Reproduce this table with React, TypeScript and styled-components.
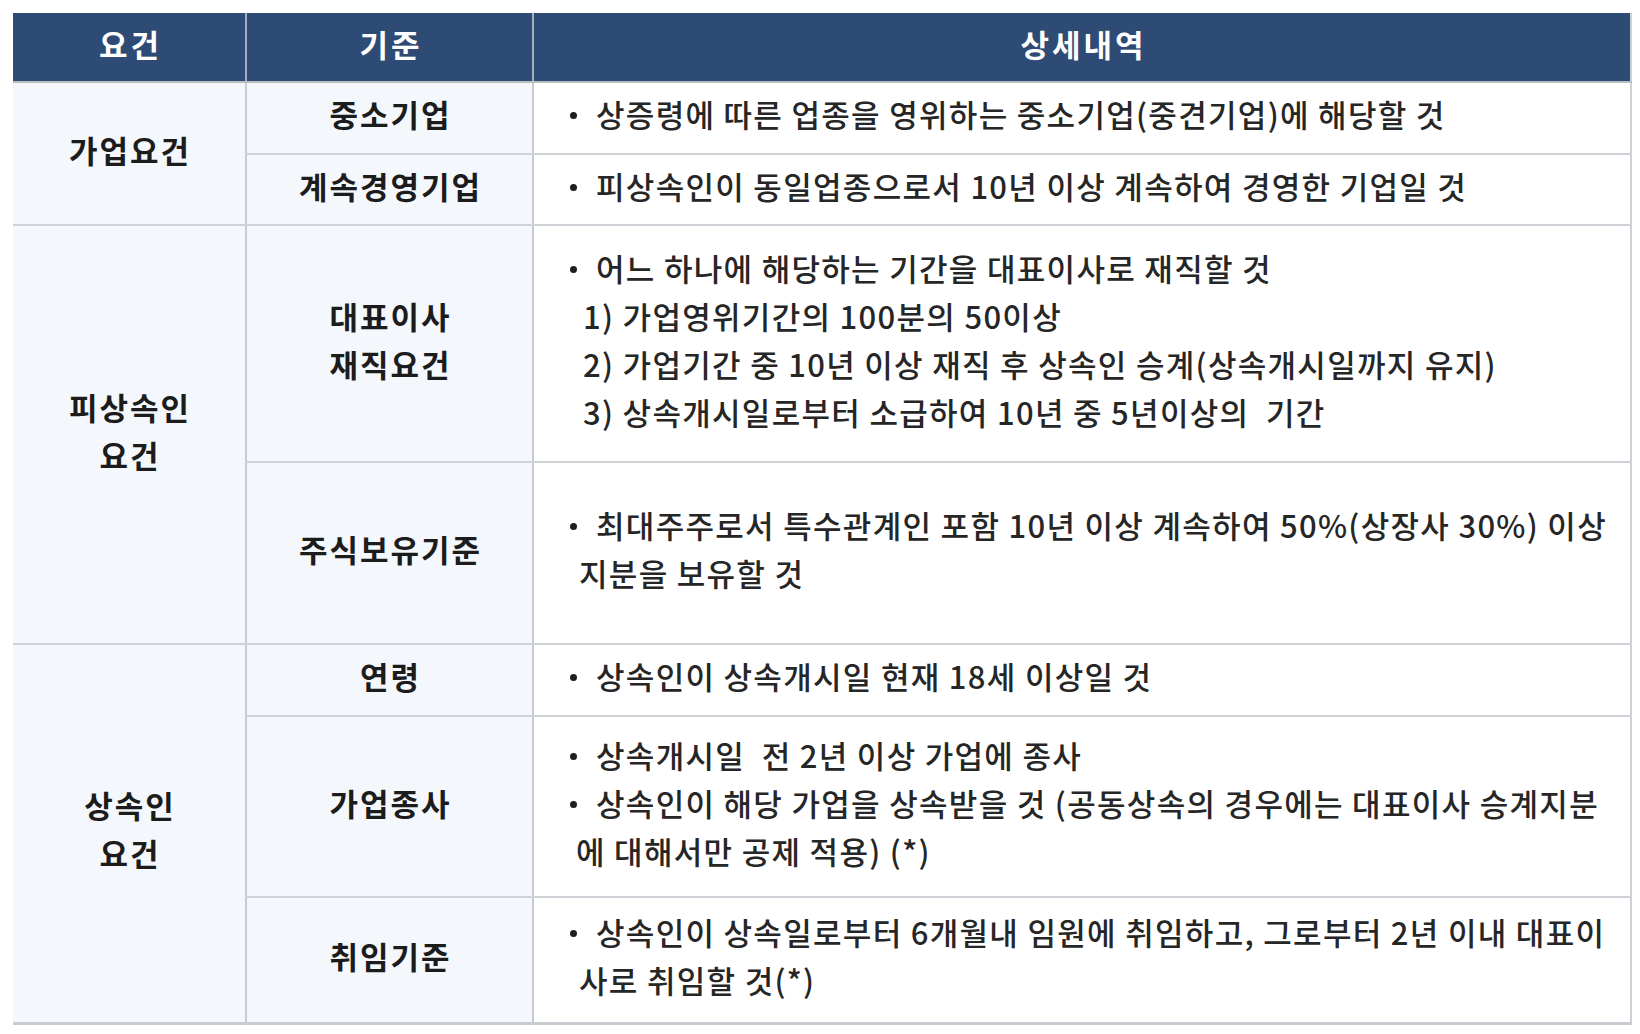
import React from "react";
import styled, { createGlobalStyle } from "styled-components";

const GlobalStyle = createGlobalStyle`
  html, body {
    margin: 0;
    padding: 0;
    background: #ffffff;
    overflow: hidden;
  }
  body {
    font-family: "Noto Sans CJK KR", "Noto Sans", sans-serif;
    color: #2a2a2a;
  }
`;

const Page = styled.div`
  padding: 13px 0 0 13px;
  width: 1640px;
  height: 1034px;
  box-sizing: border-box;
`;

const Table = styled.table`
  border-collapse: collapse;
  table-layout: fixed;
  width: 1618px;
  font-size: 31px;
  border-right: 2px solid #cdd0d4;
  border-bottom: 3px solid #c9ccd0;
`;

const Col = styled.col<{ $w: number }>`
  width: ${(p) => p.$w}px;
`;

const HeadRow = styled.tr`
  height: 69px;
`;

const HeadCell = styled.th`
  box-sizing: border-box;
  background: #2d4b74;
  color: #ffffff;
  font-weight: 700;
  text-align: center;
  vertical-align: middle;
  padding: 0 0 8px 3px;
  border-left: 2px solid #a7adb6;
  border-bottom: 2px solid #b9bec5;
  letter-spacing: 3px;
  &:first-child {
    border-left: none;
  }
`;

const Row = styled.tr<{ $h: number }>`
  height: ${(p) => p.$h}px;
`;

const LabelCell = styled.td<{ $first?: boolean }>`
  box-sizing: border-box;
  background: #f4f8fc;
  color: #1c1c1c;
  font-weight: 700;
  text-align: center;
  vertical-align: middle;
  line-height: 48px;
  padding: 0 0 8px 2px;
  border-left: ${(p) => (p.$first ? "none" : "2px solid #c8cbd0")};
  border-bottom: 2px solid #cfd2d6;
  letter-spacing: 2px;
`;

const DetailCell = styled.td`
  box-sizing: border-box;
  background: #ffffff;
  vertical-align: middle;
  padding: 0 0 8px 36px;
  border-left: 2px solid #c8cbd0;
  border-bottom: 2px solid #cfd2d6;
  overflow: hidden;
`;

const Line = styled.div<{ $indent?: number }>`
  height: 48px;
  line-height: 48px;
  white-space: pre;
  padding-left: ${(p) => p.$indent ?? 0}px;
  color: #262626;
  font-weight: 500;
  letter-spacing: 1.3px;
`;

const Bullet = styled.span`
  display: inline-block;
  width: 26px;
  vertical-align: middle;
  position: relative;
  top: -3px;
  &::before {
    content: "";
    display: block;
    width: 7px;
    height: 7px;
    border-radius: 50%;
    background: #1e1e1e;
  }
`;

type L = { text: string; bullet?: boolean; indent?: number };

const Detail: React.FC<{ lines: L[] }> = ({ lines }) => (
  <DetailCell>
    {lines.map((l, i) => (
      <Line key={i} $indent={l.bullet ? 0 : l.indent ?? 8}>
        {l.bullet && <Bullet />}
        {l.text}
      </Line>
    ))}
  </DetailCell>
);

export default function App() {
  return (
    <>
      <GlobalStyle />
      <Page>
        <Table>
          <colgroup>
            <Col $w={233} />
            <Col $w={287} />
            <Col $w={1098} />
          </colgroup>
          <thead>
            <HeadRow>
              <HeadCell>요건</HeadCell>
              <HeadCell>기준</HeadCell>
              <HeadCell>상세내역</HeadCell>
            </HeadRow>
          </thead>
          <tbody>
            <Row $h={72}>
              <LabelCell $first rowSpan={2}>
                가업요건
              </LabelCell>
              <LabelCell>중소기업</LabelCell>
              <Detail
                lines={[
                  {
                    bullet: true,
                    text: "상증령에 따른 업종을 영위하는 중소기업(중견기업)에 해당할 것",
                  },
                ]}
              />
            </Row>
            <Row $h={71}>
              <LabelCell>계속경영기업</LabelCell>
              <Detail
                lines={[
                  {
                    bullet: true,
                    text: "피상속인이 동일업종으로서 10년 이상 계속하여 경영한 기업일 것",
                  },
                ]}
              />
            </Row>
            <Row $h={237}>
              <LabelCell $first rowSpan={2}>
                피상속인
                <br />
                요건
              </LabelCell>
              <LabelCell>
                대표이사
                <br />
                재직요건
              </LabelCell>
              <Detail
                lines={[
                  { bullet: true, text: "어느 하나에 해당하는 기간을 대표이사로 재직할 것" },
                  { indent: 13, text: "1) 가업영위기간의 100분의 50이상" },
                  {
                    indent: 13,
                    text: "2) 가업기간 중 10년 이상 재직 후 상속인 승계(상속개시일까지 유지)",
                  },
                  {
                    indent: 13,
                    text: "3) 상속개시일로부터 소급하여 10년 중 5년이상의  기간",
                  },
                ]}
              />
            </Row>
            <Row $h={182}>
              <LabelCell>주식보유기준</LabelCell>
              <Detail
                lines={[
                  {
                    bullet: true,
                    text: "최대주주로서 특수관계인 포함 10년 이상 계속하여 50%(상장사 30%) 이상",
                  },
                  { indent: 9, text: "지분을 보유할 것" },
                ]}
              />
            </Row>
            <Row $h={72}>
              <LabelCell $first rowSpan={3}>
                상속인
                <br />
                요건
              </LabelCell>
              <LabelCell>연령</LabelCell>
              <Detail
                lines={[{ bullet: true, text: "상속인이 상속개시일 현재 18세 이상일 것" }]}
              />
            </Row>
            <Row $h={181}>
              <LabelCell>가업종사</LabelCell>
              <Detail
                lines={[
                  { bullet: true, text: "상속개시일  전 2년 이상 가업에 종사" },
                  {
                    bullet: true,
                    text: "상속인이 해당 가업을 상속받을 것 (공동상속의 경우에는 대표이사 승계지분",
                  },
                  { indent: 6, text: "에 대해서만 공제 적용) (*)" },
                ]}
              />
            </Row>
            <Row $h={126}>
              <LabelCell>취임기준</LabelCell>
              <Detail
                lines={[
                  {
                    bullet: true,
                    text: "상속인이 상속일로부터 6개월내 임원에 취임하고, 그로부터 2년 이내 대표이",
                  },
                  { indent: 9, text: "사로 취임할 것(*)" },
                ]}
              />
            </Row>
          </tbody>
        </Table>
      </Page>
    </>
  );
}
